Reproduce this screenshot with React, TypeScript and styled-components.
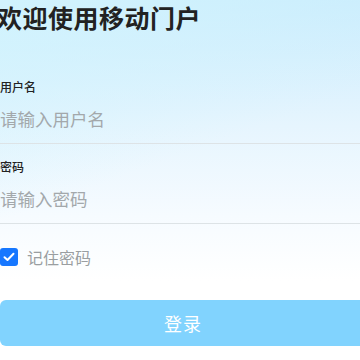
import React from "react";
import styled, { createGlobalStyle } from "styled-components";

const Global = createGlobalStyle`
  html, body { margin: 0; padding: 0; }
  body {
    width: 360px; height: 360px; overflow: hidden;
    font-family: "Noto Sans CJK SC", "Noto Sans", sans-serif;
  }
`;

const Page = styled.div`
  width: 360px;
  height: 360px;
  overflow: hidden;
  background:
    linear-gradient(160deg, rgba(210, 244, 253, 0.9) 0%, rgba(198, 233, 253, 0) 45%),
    linear-gradient(180deg, #c9ebfd 0%, #e6f5fe 35%, #f6fbff 60%, #ffffff 78%);
`;

const Form = styled.div`
  margin-left: -3px;
  width: 380px;
  display: flex;
  flex-direction: column;
`;

const Title = styled.h1`
  margin: 0;
  padding-top: 1px;
  font-size: 25px;
  line-height: 32px;
  font-weight: 700;
  color: #222;
  letter-spacing: 0.5px;
`;

const Field = styled.div<{ $top: number }>`
  margin-top: ${(p) => p.$top}px;
  margin-left: 3px;
  display: flex;
  flex-direction: column;
`;

const Label = styled.label`
  font-size: 12px;
  line-height: 16px;
  font-weight: 500;
  color: #222;
`;

const Input = styled.input`
  margin-top: 12px;
  border: none;
  border-bottom: 1px solid #dde3e6;
  background: transparent;
  padding: 0 0 12px 0;
  font-family: inherit;
  font-size: 17.5px;
  line-height: 24px;
  color: #333;
  outline: none;
  &::placeholder { color: #a3a8ab; }
`;

const Remember = styled.label`
  margin-top: 21px;
  margin-left: 3px;
  display: flex;
  align-items: center;
  gap: 9px;
  font-size: 16px;
  color: #9a9ea1;
`;

const Box = styled.span`
  width: 18px;
  height: 18px;
  border-radius: 3px;
  background: #1677ff;
  display: flex;
  align-items: center;
  justify-content: center;
`;

const Button = styled.button`
  margin-top: 31px;
  margin-left: 3px;
  width: 372px;
  height: 46px;
  border: none;
  border-radius: 6px;
  background: #81d3fe;
  color: #ffffff;
  font-family: inherit;
  font-size: 18px;
  letter-spacing: 1px;
  padding-right: 12px;
`;

export default function App() {
  return (
    <Page>
      <Global />
      <Form>
        <Title>欢迎使用移动门户</Title>
        <Field $top={46}>
          <Label>用户名</Label>
          <Input placeholder="请输入用户名" />
        </Field>
        <Field $top={15}>
          <Label>密码</Label>
          <Input type="password" placeholder="请输入密码" />
        </Field>
        <Remember>
          <Box>
            <svg width="12" height="10" viewBox="0 0 12 10">
              <path d="M1.5 5.2 L4.5 8 L10.5 1.8" fill="none" stroke="#fff" strokeWidth="2" strokeLinecap="round" strokeLinejoin="round" />
            </svg>
          </Box>
          记住密码
        </Remember>
        <Button>登录</Button>
      </Form>
    </Page>
  );
}
